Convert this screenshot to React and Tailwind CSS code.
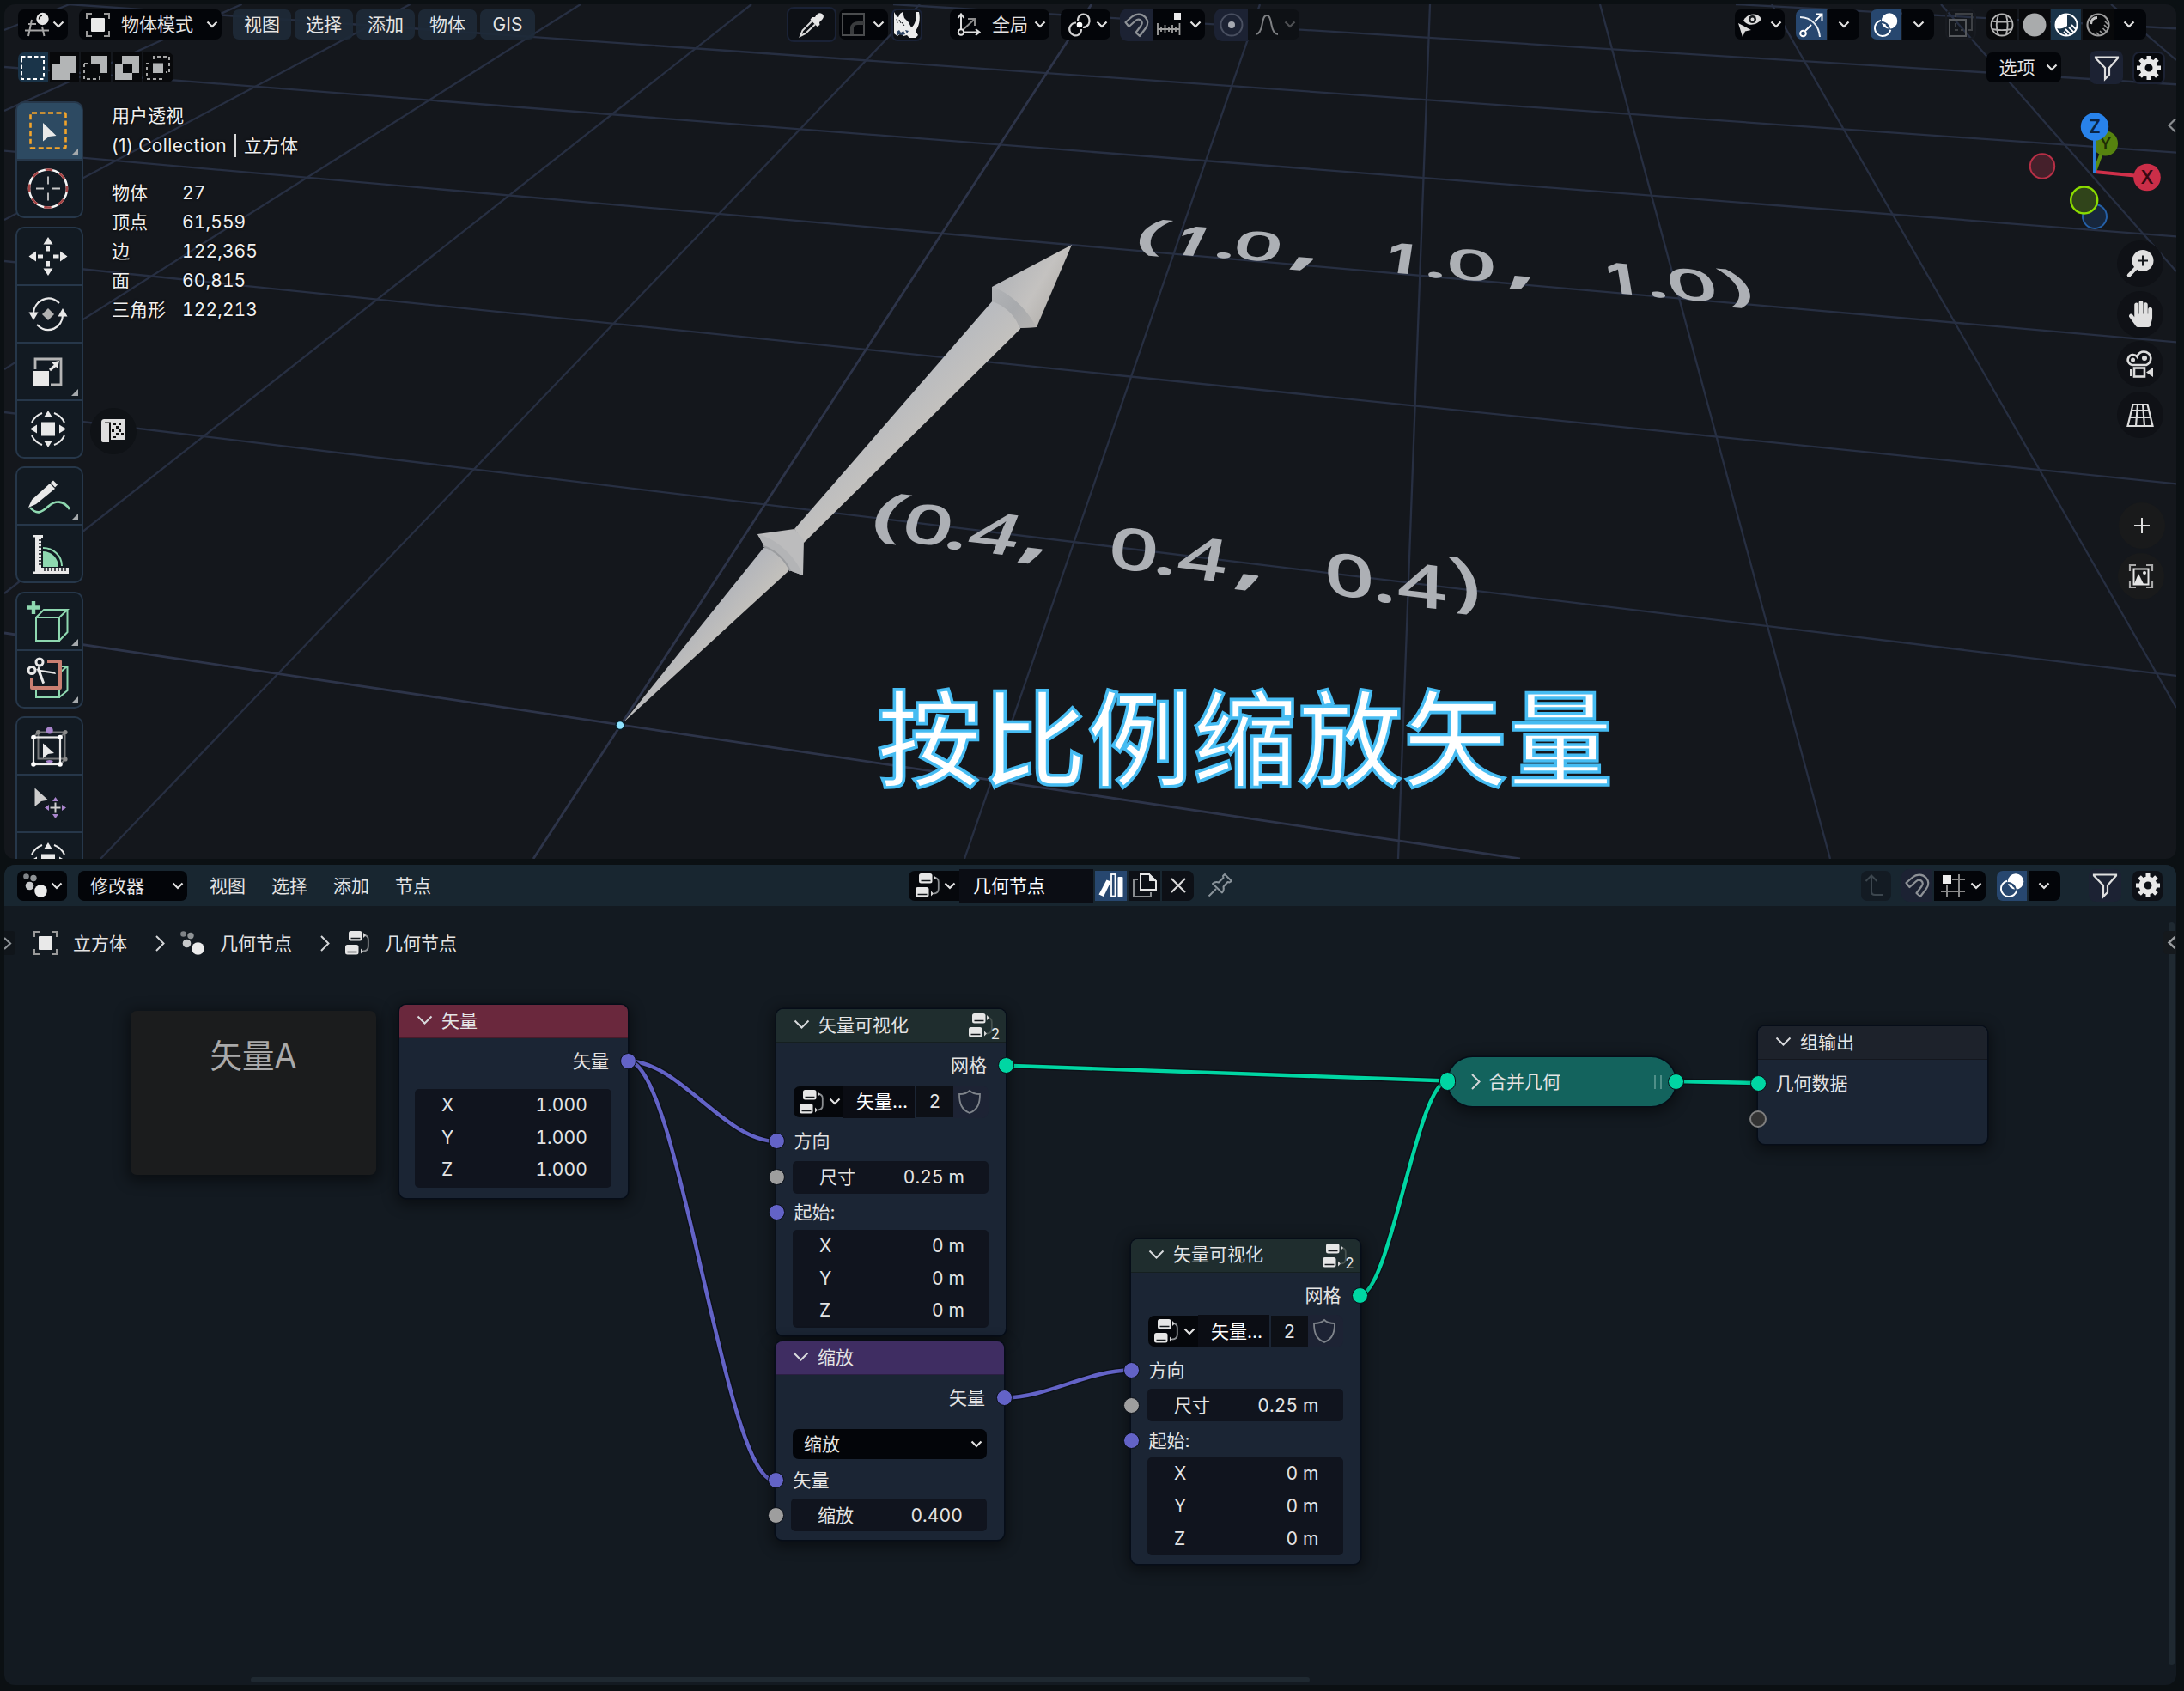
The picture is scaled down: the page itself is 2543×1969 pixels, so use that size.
import React from "react";
import { FaHandPaper } from "react-icons/fa";

/* ---------- small icon set ---------- */

const Svg = ({ s = 28, w, h, vb, className = "", children }) => (
  <svg width={w || s} height={h || s} viewBox={vb || `0 0 ${w || s} ${h || s}`} fill="none" className={"shrink-0 overflow-visible " + className}>
    {children}
  </svg>
);

const Down = ({ className = "" }) => (
  <Svg w={14} h={9} className={className}>
    <path d="M1.5 1.5 7 7l5.500-5.500" stroke="#e2e2e2" strokeWidth="2.200" />
  </Svg>
);

const HeaderDown = () => (
  <Svg w={17} h={10}>
    <path d="M.5.500 8.500 8.500l8-8" stroke="#d8dadd" strokeWidth="2" />
  </Svg>
);

const Right = () => (
  <Svg w={11} h={19}>
    <path d="M1 1l8.500 8.500L1 18" stroke="#d4d6d8" strokeWidth="2" />
  </Svg>
);

const View3D = () => (
  <Svg>
    <g stroke="#a5a5a5" strokeWidth="2">
      <path d="M4 13h9M0 20.500h28M8 8 4 27M20 16l2.500 11" />
    </g>
    <circle cx="20.500" cy="7" r="7.200" fill="#e6e6e6" />
    <path d="M16.500 7.500c0-2.500 1.500-4 3.500-4.200" stroke="#111" strokeWidth="1.500" />
  </Svg>
);

const ObjectIcon = () => (
  <Svg>
    <path d="M1 7V1h6M21 1h6v6M27 21v6h-6M7 27H1v-6" stroke="#9a9a9a" strokeWidth="2" />
    <rect x="6" y="6" width="16" height="16" rx="1" fill="#e9e9e9" />
  </Svg>
);

const Dots = () => (
  <Svg>
    <circle cx="3.500" cy="3.500" r="3.300" fill="#7f8387" />
    <circle cx="12" cy="5.500" r="3.700" fill="#8f9396" />
    <circle cx="7.500" cy="14.500" r="4.800" fill="#c6c8ca" />
    <circle cx="20.500" cy="20.500" r="7.300" fill="#ececec" />
  </Svg>
);

const TreeIcon = ({ dim }) => (
  <Svg>
    <rect x="4" y="0" width="15.500" height="11.500" rx="2.500" fill="#e6e6e6" />
    <path d="M6.500 8.500h11" stroke="#15191d" strokeWidth="1.500" />
    <rect x="0" y="16" width="15.500" height="11.500" rx="2.500" fill="#e6e6e6" />
    <path d="M2.500 24.500h11" stroke="#15191d" strokeWidth="1.500" />
    <path d="M22 5c4 .300 4.800 2 4.800 5v8c0 3-1.500 5.300-6 5.500" stroke={dim ? "#46524f" : "#8a8d90"} strokeWidth="1.800" />
    <path d="M21 2v6l3-3zM18 20.500v6l3-3z" fill="#d5d5d5" />
  </Svg>
);

const Eyedropper = () => (
  <Svg>
    <path d="M18 5c2-4 5-6 8-4s2.500 5-1 8l-2 2 .500 3-3 2-8-8 2-3z" fill="#e6e6e6" />
    <path d="M14 10 3.500 20.500 1 27l6-3L18 13.500" stroke="#d9d9d9" strokeWidth="2" />
  </Svg>
);

const Corner = () => (
  <Svg>
    <rect x="1" y="1" width="25" height="25" stroke="#4a4c4e" strokeWidth="2" />
    <path d="M12 25v-7c0-4 3-6 7-6h7" stroke="#3a3c3e" strokeWidth="4" />
  </Svg>
);

const Rhino = () => (
  <Svg w={30} h={30}>
    <path d="M0 0l3 5 2 1 2-4 3-2 2 7 5 5 3 6c4-2 6-9 6-18h3c2 9 0 17-4 22l3 5-3 3h-7l-3-3-4 1-3-3-4 3-4-3z" fill="#ececec" />
    <path d="M3 23l3-2 2 3 3-2 2 4-4 1-3-1-3 2zM13 21l4 1-2 3z" fill="#2b4262" />
    <path d="M9 12l3 4M6 9l2 4M3 8l1 5" stroke="#14181d" strokeWidth="1" />
  </Svg>
);

const Orient = () => (
  <Svg>
    <path d="M5 22V2M1.500 6 5 1.500 8.500 6M6 22.500h20M22 19l4.500 3.500L22 26" stroke="#dedede" strokeWidth="2" />
    <path d="M7 20 20 8M13 7h8v8" stroke="#8c8c8c" strokeWidth="2" />
    <circle cx="5" cy="22.500" r="3.200" stroke="#e6e6e6" strokeWidth="2" fill="#0a0c0e" />
  </Svg>
);

const Pivot = () => (
  <Svg>
    <path d="M12 9C12 3 17 .500 21 2s6 7 3.500 11.500c-1.500 2-4 3.500-6.500 3.500" stroke="#d4d4d4" strokeWidth="2.200" />
    <path d="M16 19c0 6-5 8.500-9 7S.500 19 3.500 15c1.500-2.500 4-3.500 6.500-3.500" stroke="#d4d4d4" strokeWidth="2.200" />
    <circle cx="14" cy="14" r="3.300" fill="#fff" />
  </Svg>
);

const Magnet = () => (
  <Svg>
    <path d="M1.500 11 9 4.500c5-4.500 12-3.500 15.500.500s3.500 9 0 13.500L18 27l-4.500-4 6-8c2-2.500 1.500-5-.500-6.500s-4-1-6 .800L5.500 16z" stroke="#8d9196" strokeWidth="2.200" strokeLinejoin="round" />
  </Svg>
);

const SnapIncrement = () => (
  <Svg>
    <rect x="20" y="0" width="8" height="8" fill="#ededed" />
    <path d="M1 12v14M9.500 14v10M18 14v10M26.500 12v14M1 19h26M5 16v6M14 16v6M22 16v6" stroke="#a2a2a2" strokeWidth="1.800" />
  </Svg>
);

const SnapGrid = () => (
  <Svg>
    <rect x="2" y="2" width="10" height="10" fill="#ededed" />
    <path d="M21 1v26M7 14v13M13 7h15M0 21h28" stroke="#8a8a8a" strokeWidth="2" />
  </Svg>
);

const Proportional = () => (
  <Svg>
    <circle cx="14" cy="14" r="12.500" stroke="#494f60" strokeWidth="2" />
    <circle cx="14" cy="14" r="4" fill="#a5a8b0" />
  </Svg>
);

const Falloff = () => (
  <Svg>
    <path d="M1 25c4 0 6-3 7.500-11S11 3 14 3s4 3 5.500 11S23 25 27 25" stroke="#7d7f82" strokeWidth="2" />
  </Svg>
);

const Visibility = () => (
  <Svg>
    <path d="M6 9c5-9 16-10 21-2-5 8-16 9-21 2z" fill="#dcdcdc" />
    <circle cx="16.500" cy="7.500" r="4.500" fill="#15181b" />
    <circle cx="16.500" cy="7.500" r="2" fill="#dcdcdc" />
    <path d="M0 12l15 8-7 1.500L5 28z" fill="#dcdcdc" />
  </Svg>
);

const Gizmo = () => (
  <Svg>
    <path d="M1 5c13 0 22 10 23 23" stroke="#e8edf3" strokeWidth="2" />
    <circle cx="4.500" cy="24" r="3.300" stroke="#fff" strokeWidth="2" />
    <path d="M7 21l7-7M18 10l8-8M19 1.500h7.500V9" stroke="#fff" strokeWidth="2" />
  </Svg>
);

const Overlays = () => (
  <Svg>
    <circle cx="18" cy="9.500" r="9.300" fill="#fff" />
    <path d="M8 8.700a9.300 9.300 0 1 0 11.300 11" stroke="#fff" strokeWidth="2" />
    <path d="M9 11a9 9 0 0 1 9 8" stroke="#27476f" strokeWidth="2" />
    <path d="M10.500 10.500l7.500 7.500" stroke="#27476f" strokeWidth="1.200" strokeDasharray="3 2" />
  </Svg>
);

const Xray = () => (
  <Svg>
    <path d="M8 5V1h19v19h-5" stroke="#3d4044" strokeWidth="2" />
    <rect x="1" y="8" width="19" height="19" stroke="#55585c" strokeWidth="2" />
    <path d="M8 12v8h9" stroke="#3d4044" strokeWidth="2" strokeDasharray="4 3" />
  </Svg>
);

const Wire = () => (
  <Svg>
    <g stroke="#b3b3b3" strokeWidth="1.900">
      <circle cx="14" cy="14" r="12.500" />
      <path d="M10 2c-3 8-3 16 0 24M19 3c2 7 2 15 0 22M2 9.500c8 1.500 16 1.500 24 0M2 19c8 1.500 16 1.500 24 0" />
    </g>
  </Svg>
);

const Solid = () => (
  <Svg>
    <circle cx="14" cy="14" r="13.500" fill="#a9abac" />
  </Svg>
);

const Material = () => (
  <Svg>
    <circle cx="14" cy="14" r="12.500" stroke="#fff" strokeWidth="2" />
    <path d="M14 1.500A12.500 12.500 0 0 0 1.500 14c0 2 .500 3 1 4 4 1 8 0 11.500-2z" fill="#fff" />
    <path d="M14 1.500v14" stroke="#fff" strokeWidth="2" />
    <path d="M13 19l6 6M17 17l6 6M20 14l5 5M11 22l4 4" stroke="#fff" strokeWidth="1.800" />
  </Svg>
);

const Rendered = () => (
  <Svg>
    <circle cx="14" cy="14" r="12.500" stroke="#9b9b9b" strokeWidth="2.200" />
    <path d="M5.500 13C6 8 9 5.500 13 5.500" stroke="#c4c4c4" strokeWidth="3" />
    <path d="M12 23l3 3M16 21l3.500 3.500M19.500 18l4 4M21 14l4 4M22 10l4 4" stroke="#9b9b9b" strokeWidth="1.700" />
  </Svg>
);

const Filter = () => (
  <Svg>
    <path d="M1 1.500h26v1L17 14v8l-5 5V14L1 2.500z" stroke="#dfdfdf" strokeWidth="2.200" />
  </Svg>
);

const Gear = () => (
  <Svg>
    <circle cx="14" cy="14" r="7.500" stroke="#e8e8e8" strokeWidth="6" />
    {[0, 45, 90, 135, 180, 225, 270, 315].map((a) => (
      <path key={a} d="M11.500 0h5v5h-5z" fill="#e8e8e8" transform={`rotate(${a} 14 14)`} />
    ))}
  </Svg>
);

/* ---------- building blocks ---------- */

const btn = "flex items-center h-[35px] shrink-0 ";
const Menu = ({ className, children }) => (
  <div className={btn + "justify-center rounded-[7px] bg-[#1e2a38]/90 w-[68px] " + className}>{children}</div>
);

const ViewportHeader = () => (
  <div className="flex items-center mt-[6px] ml-4 h-[35px]">
    <div className={btn + "w-[58px] rounded-[7px] bg-[#030509] pl-[8px] gap-[4px]"}><View3D /><Down /></div>
    <div className={btn + "w-[166px] rounded-[7px] bg-[#030509] ml-[13px] pl-[8px]"}>
      <ObjectIcon /><span className="ml-[13px] w-[84px]">物体模式</span><Down className="ml-[15px]" />
    </div>
    <Menu className="ml-[13px]">视图</Menu>
    <Menu className="ml-1">选择</Menu>
    <Menu className="ml-1">添加</Menu>
    <Menu className="ml-1">物体</Menu>
    <div className={btn + "w-[64px] justify-center rounded-[7px] bg-[#1e2a38]/90 ml-1"}>GIS</div>

    <div className="flex items-center justify-center h-[41px] w-[58px] ml-[293px] rounded-[8px] border-2 border-[#1a2236] bg-[#0d1015] shrink-0"><Eyedropper /></div>
    <div className={btn + "w-[57px] rounded-[7px] bg-[#030509] ml-[3px] pl-[3px] gap-[8px]"}><Corner /><Down /></div>
    <div className="flex items-center justify-center h-[38px] w-[36px] ml-1 rounded-[7px] border-2 border-[#1a2236] bg-[#0d1015] shrink-0"><Rhino /></div>
    <div className={btn + "w-[116px] rounded-[7px] bg-[#030509] ml-8 pl-[8px]"}>
      <Orient /><span className="ml-[13px] w-[43px]">全局</span><Down className="ml-[6px]" />
    </div>
    <div className={btn + "w-[58px] rounded-[7px] bg-[#030509] ml-[13px] pl-[8px] gap-[5px]"}><Pivot /><Down /></div>
    <div className="flex items-center justify-center h-[38px] w-[38px] ml-[11px] rounded-l-[9px] bg-[#1c2233] shrink-0"><Magnet /></div>
    <div className={btn + "w-[61px] rounded-r-[7px] bg-[#030509] pl-[5px] gap-[10px]"}><SnapIncrement /><Down /></div>
    <div className="flex items-center justify-center h-[38px] w-[39px] ml-[11px] rounded-l-[9px] bg-[#1c2233] shrink-0"><Proportional /></div>
    <div className={btn + "w-[60px] rounded-r-[7px] bg-[#0e1115] pl-[8px] gap-[6px]"}><Falloff /><span className="flex opacity-30"><Down /></span></div>

    <div className={btn + "w-[58px] rounded-[7px] bg-[#030509] ml-[507px] pl-[4px] gap-[9px]"}><Visibility /><Down /></div>
    <div className={btn + "w-[36px] justify-center rounded-l-[7px] bg-[#27476f] ml-[13px]"}><Gizmo /></div>
    <div className={btn + "w-[36px] justify-center rounded-r-[7px] bg-[#030509] ml-[2px]"}><Down /></div>
    <div className={btn + "w-[35px] justify-center rounded-l-[7px] bg-[#27476f] ml-[13px]"}><Overlays /></div>
    <div className={btn + "w-[37px] justify-center rounded-r-[7px] bg-[#030509] ml-[2px]"}><Down /></div>
    <div className={btn + "w-[36px] justify-center rounded-[7px] border-2 border-[#181b21] ml-[13px]"}><Xray /></div>
    <div className={btn + "w-[36px] justify-center rounded-l-[7px] bg-[#08090b] ml-[12px]"}><Wire /></div>
    <div className={btn + "w-[36px] justify-center bg-[#08090b] ml-[1.500px]"}><Solid /></div>
    <div className={btn + "w-[35px] justify-center bg-[#1a3449] ml-[1.500px]"}><Material /></div>
    <div className={btn + "w-[36px] justify-center bg-[#08090b] ml-[2px]"}><Rendered /></div>
    <div className={btn + "w-[37px] justify-center rounded-r-[7px] bg-[#030509] ml-[1px] pr-[3px]"}><Down /></div>
  </div>
);

const sel = "flex items-center justify-center w-[34.5px] h-[35px] shrink-0 ";
const SelectRow = () => (
  <div className="flex items-center mt-[15px] ml-4 h-[35px]">
    <div className="flex gap-[2px] rounded-[7px] overflow-hidden shrink-0">
      <div className={sel + "bg-[#1a3449]"}>
        <Svg><rect x="1" y="1" width="26" height="26" stroke="#fff" strokeWidth="2" strokeDasharray="4.500 3" /></Svg>
      </div>
      <div className={sel + "bg-[#08090b]"}>
        <Svg><path d="M9 0h19v20h-8v8H0V9h9z" fill="#b3b5b6" /></Svg>
      </div>
      <div className={sel + "bg-[#08090b]"}>
        <Svg>
          <path d="M9 0h19v20h-9V9H9z" fill="#b3b5b6" />
          <path d="M1 9v18h18v-5M1 9h5" stroke="#a5a5a5" strokeWidth="2" strokeDasharray="4 3" />
        </Svg>
      </div>
      <div className={sel + "bg-[#08090b]"}>
        <Svg>
          <path d="M8 0h20v20h-8v8H0V9h8zM9 9v11h11V9z" fill="#b3b5b6" fillRule="evenodd" />
        </Svg>
      </div>
      <div className={sel + "bg-[#08090b]"}>
        <Svg>
          <rect x="8" y="8.500" width="12" height="11.500" fill="#b3b5b6" />
          <path d="M9 4V1h18v18h-4M4 9H1v18h18v-4" stroke="#a5a5a5" strokeWidth="2" strokeDasharray="4 3" />
        </Svg>
      </div>
    </div>
    <div className={btn + "w-[87px] ml-[2111px] pl-[15px] rounded-[7px] bg-[#030509]"}>
      <span className="w-[42px]">选项</span><Down className="ml-[12px]" />
    </div>
    <div className="flex items-center justify-center w-[39px] h-[39px] ml-[33.5px] rounded-[8px] bg-[#1c2233] shrink-0"><Filter /></div>
    <div className="flex items-center justify-center w-[38px] h-[38px] ml-[11px] rounded-[8px] border-2 border-[#1c2233] bg-[#07090d] shrink-0"><Gear /></div>
  </div>
);

/* ---------- tool shelf ---------- */

const T = ({ children }) => <Svg s={48}>{children}</Svg>;
const W = "#e9e9e9";
const G = "#8ed8b0";

const TransformTool = () => (
  <T>
    <path d="M5 17A21 21 0 0 1 17 6M31 6A21 21 0 0 1 43 17M43 32A21 21 0 0 1 31 43M17 43A21 21 0 0 1 5 32" stroke={W} strokeWidth="2" />
    <rect x="16" y="16.500" width="16" height="16" fill={W} />
    <path d="M24 3l-5 8h10zM24 46l-5-8h10zM3 24.500l8-5v10zM45 24.500l-8-5v10z" fill={W} />
  </T>
);

const tools = {
  select: (
    <T>
      <rect x="3.500" y="3.500" width="41" height="41" rx="1.500" stroke="#f3a42b" strokeWidth="2.600" strokeDasharray="6 3.500" />
      <path d="M18 15l15.500 15-8.500 1-7 5.500z" fill={W} />
    </T>
  ),
  cursor: (
    <T>
      <circle cx="24" cy="24.500" r="22" stroke="#f4f4f4" strokeWidth="2.600" />
      <circle cx="24" cy="24.500" r="22" stroke="#a44445" strokeWidth="2.600" strokeDasharray="8.640 8.640" strokeDashoffset="4" />
      <path d="M24 10.500v9M24 29.500v9M10 24.500h9M29 24.500h9" stroke="#c9c9c9" strokeWidth="1.800" />
    </T>
  ),
  move: (
    <T>
      <path d="M24 2l-5.500 8.500h11zM24 47l-5.500-8.500h11zM1.500 24.500l8.500-6v12zM46.500 24.500l-8.500-6v12z" fill={W} />
      <path d="M24 12.500v6M24 30v6.500M12 24.500h6M30 24.500h6.500" stroke={W} strokeWidth="4" />
    </T>
  ),
  rotate: (
    <T>
      <path d="M7 23C8 10 24 0 37 12M41 26C41 40 24 50 11 37" stroke={W} strokeWidth="2.200" />
      <path d="M1.500 22.500h11L7 32zM46.500 27.500h-11L41 18z" fill={W} />
      <path d="M24 18l7 7-7 7-7-7z" fill="#b1b1b1" />
    </T>
  ),
  scale: (
    <T>
      <path d="M9 22V10h30v30H27" stroke="#b5b5b5" strokeWidth="2.800" />
      <rect x="6" y="24" width="19" height="18" fill={W} />
      <path d="M26 23l7-6" stroke={W} strokeWidth="3" />
      <path d="M28 14l9-2-2 9z" fill={W} />
    </T>
  ),
  transform: <TransformTool />,
  annotate: (
    <T>
      <path d="M3 38C12 48 18 42 25 36s17-7 24 4" stroke={G} strokeWidth="2.600" />
      <path d="M1 38l4-9 21-19 6 6-22 18z" fill={W} />
      <path d="M27 9l3-2.500 5 5-3 3z" fill={W} />
    </T>
  ),
  measure: (
    <T>
      <path d="M6 3h12v3h-2v35h32v7H6v-2.500h3V5.500H6z" fill={W} />
      <path d="M13 9h5M13 13h5M13 17h5M13 21h5M13 25h5M13 29h5M13 33h5M13 37h5M20 41v4M24 41v4M28 41v4M32 41v4M36 41v4M40 41v4M44 41v4" stroke="#14191f" strokeWidth="1.500" />
      <path d="M18 22c10 0 18 8 18 18H18z" fill={G} />
      <path d="M18 18c12 0 22 9 22 21" stroke={G} strokeWidth="2" />
    </T>
  ),
  addCube: (
    <T>
      <path d="M7 1v15M-.500 8.500h15" stroke={G} strokeWidth="4.400" />
      <path d="M10 20h27v27H10zM10 20l9-9h27.500L37 20M46.500 11v26L37 47" stroke={G} strokeWidth="2" />
    </T>
  ),
  cut: (
    <T>
      <path d="M10 36v10h27V36M37 46l9.500-8V10h-7M38 17l8-7" stroke={G} strokeWidth="2" />
      <path d="M23 4h15v31H5V24" stroke="#c97f72" strokeWidth="4" strokeLinejoin="round" />
      <circle cx="14" cy="5" r="4" stroke={W} strokeWidth="3" />
      <circle cx="5" cy="14.500" r="4" stroke={W} strokeWidth="3" />
      <path d="M9 13l23 3.500L33 19 14 16zM13 9l7 20-2.500 1.500L11 14z" fill={W} />
    </T>
  ),
  cage: (
    <T>
      <path d="M12.500 8.500h31v31h-31zM7 14.500l5.500-6M38 14.500l6-6M38 46l6-6" stroke="#77797b" strokeWidth="2" />
      <rect x="7" y="14.500" width="31" height="31.500" stroke={W} strokeWidth="2.200" />
      <circle cx="12.500" cy="8.500" r="2.600" fill="#8a8a8a" /><circle cx="44" cy="8.500" r="2.600" fill="#8a8a8a" /><circle cx="44" cy="40" r="2.600" fill="#8a8a8a" />
      <circle cx="7" cy="14.500" r="2.800" fill="#fff" /><circle cx="38" cy="14.500" r="2.800" fill="#fff" /><circle cx="7" cy="46" r="2.800" fill="#fff" /><circle cx="38" cy="46" r="2.800" fill="#fff" />
      <circle cx="25.700" cy="6.500" r="4" fill="#a884cc" /><ellipse cx="25.700" cy="42.500" rx="4" ry="1.600" fill="#a884cc" />
      <path d="M18 21.500l13 11.500-7 1-6 5z" fill={W} />
    </T>
  ),
  tweak: (
    <T>
      <path d="M8.500 6.500L24 20.500l-8 1.500-7.500 6z" fill="#cdcdcd" />
      <path d="M32.500 23.500v12M26.500 29.500h12" stroke="#cfcfcf" strokeWidth="2" />
      <path d="M32.500 17l-3.500 5h7zM32.500 42l-3.500-5h7zM20 29.500l5-3.500v7zM45 29.500l-5-3.500v7z" fill="#a884cc" />
    </T>
  ),
};

const groups = [
  [["select", 1], ["cursor", 0]],
  [["move", 0], ["rotate", 0], ["scale", 1], ["transform", 0]],
  [["annotate", 1], ["measure", 0]],
  [["addCube", 1], ["cut", 1]],
  [["cage", 0], ["tweak", 0], ["transform", 0]],
];

const ToolShelf = () => (
  <div className="flex flex-col gap-[9.500px] w-[79px] shrink-0">
    {groups.map((g, i) => (
      <div key={i} className="flex flex-col gap-[2px] rounded-[10px] border-2 border-[#26374a] bg-[#26374a] overflow-hidden shrink-0">
        {g.map(([name, mark]) => (
          <div key={name} className={"relative flex items-center justify-center h-[65px] pr-[3px] pb-px " + (name === "select" ? "bg-[#2d4a62]" : "bg-[#121a22]")}>
            {tools[name]}
            {mark ? <Svg w={8} h={8} className="absolute right-[4px] bottom-[4px]"><path d="M8 0v8H0z" fill="#a5a9ac" /></Svg> : null}
          </div>
        ))}
      </div>
    ))}
  </div>
);

const num = "tabular-nums tracking-[0.1px]";

const stats = [["物体", "27"], ["顶点", "61,559"], ["边", "122,365"], ["面", "60,815"], ["三角形", "122,213"]];
const Stats = () => (
  <div className="flex flex-col ml-[33px] -mt-[1px] text-[#f0f0f0] [text-shadow:0_0_3px_#000]">
    <div className="h-[35px] flex items-center">用户透视</div>
    <div className="h-[34px] flex items-center"><span className="tracking-[0.35px]">(1) Collection</span><span className="w-[2px] h-[27px] bg-[#d8d8d8] mx-[9px]" />立方体</div>
    <div className="mt-[21px] flex flex-col">
      {stats.map(([k, v]) => (
        <div key={k} className="h-[34px] flex items-center"><span className="w-[82px]">{k}</span><span className={num}>{v}</span></div>
      ))}
    </div>
  </div>
);

const Round = ({ className = "bg-[#0f1116]", children }) => (
  <div className={"flex items-center justify-center size-[54px] rounded-full shrink-0 " + className}>{children}</div>
);

const NavButtons = () => (
  <div className="flex flex-col gap-[4.500px] mt-[162px] ml-auto mr-[15px]">
    <Round>
      <Svg s={32}>
        <path d="M12 20L3 29.500" stroke="#e0e0e0" strokeWidth="4.500" strokeLinecap="round" />
        <circle cx="19" cy="12.500" r="12.500" fill="#e0e0e0" />
        <path d="M19 6.500v12M13 12.500h12" stroke="#15181c" strokeWidth="2" />
      </Svg>
    </Round>
    <Round><FaHandPaper size={31} color="#e0e0e0" /></Round>
    <Round>
      <Svg s={32}>
        <g stroke="#dcdcdc" strokeWidth="2.600">
          <path d="M7 17a6 6 0 1 1 5.500-9.500A8 8 0 1 1 23 17z" />
          <rect x="9" y="20.500" width="12" height="10" />
        </g>
        <circle cx="7.500" cy="11" r="2.500" fill="#dcdcdc" /><circle cx="21" cy="9" r="3" fill="#dcdcdc" />
        <path d="M31 20v11l-8-5.500zM4 22h3v8H4z" fill="#dcdcdc" />
      </Svg>
    </Round>
    <Round>
      <Svg s={32}>
        <path d="M7.500 4h17l6 25h-29zM5.500 11h21M3.500 19h25M13 4l-2 25M19 4l2 25" stroke="#dcdcdc" strokeWidth="2.200" />
      </Svg>
    </Round>
    <Round className="bg-[#191a1b] mt-[71px] ml-[2px] -mr-[2px]">
      <Svg s={18}><path d="M9 0v18M0 9h18" stroke="#dedede" strokeWidth="2" /></Svg>
    </Round>
    <Round className="bg-[#191a1b] ml-[1px] -mr-[1px]">
      <Svg><path d="M1 8V1h7M20 1h7v7M27 20v7h-7M8 27H1v-7" stroke="#a9a9a9" strokeWidth="2.200" />
        <rect x="5.500" y="5.500" width="17" height="18" stroke="#e6e6e6" strokeWidth="2" />
        <path d="M6 23l5-12 6 12z" fill="#e6e6e6" /><circle cx="18" cy="10" r="2" fill="#e6e6e6" />
      </Svg>
    </Round>
  </div>
);

/* ---------- 3D scene ---------- */

const gridLines = [
  [676, 5, 5, 430], [875, 5, 5, 691], [1071, 5, 117, 1000], [477.6, 5, 5, 256], [281.6, 5, 5, 129], [81, 5, 5, 35],
  [1467, 5, 1123, 1000], [1665, 5, 1628, 1000], [1863, 5, 2131, 1000], [2063, 5, 2534, 824], [2260, 5, 2534, 316], [2458, 5, 2534, 70],
  [5, 78, 2535, 275.5], [80, 5, 2535, 177.700], [1040, 5, 2535, 98.300], [2021, 5, 2535, 33.300],
  [5, 175.700, 2535, 398.500], [5, 304, 2535, 563.500], [5, 480, 2535, 787],
];

// [glyph, x, baseline, x scale, y scale, lean]
const upper = [
  ["(", 1337, 290, 1.2, 0.48, 0.4], ["1", 1378, 297, 0.68, 0.455, 0.48], [".", 1424, 300, 1.1, 0.46, 0.3], ["0", 1461, 303, 1.0, 0.46, 0.25], [",", 1518, 307, 1.5, 0.62, 0.2],
  ["1", 1628, 318, 0.68, 0.475, 0.15], [".", 1671, 323, 1.1, 0.48, 0], ["0", 1713, 326, 1.04, 0.49, 0.02], [",", 1772, 329, 1.5, 0.64, -0.1],
  ["1", 1889, 342, 0.68, 0.49, -0.16], [".", 1932, 346, 1.1, 0.49, -0.3], ["0", 1974, 350, 1.04, 0.51, -0.22], [")", 2028, 351, 1.2, 0.52, -0.4],
];
const lower = [
  ["(", 1030, 622, 1.3, 0.66, 0.33], ["0", 1076, 633.500, 1.02, 0.63, 0.22], [".", 1110, 639, 1.1, 0.64, 0.3], ["4", 1150, 644, 1.0, 0.64, 0.4], [",", 1202, 647, 1.5, 0.74, 0.25],
  ["0", 1318, 664, 1.02, 0.67, 0.1], [".", 1355, 669, 1.1, 0.67, 0.1], ["4", 1396, 674.500, 1.0, 0.67, 0.2], [",", 1454, 678, 1.5, 0.76, 0.15],
  ["0", 1572, 695, 1.02, 0.69, -0.03], [".", 1612, 701, 1.1, 0.7, 0], ["4", 1655, 707, 1.0, 0.7, 0.02], [")", 1709, 704, 1.15, 0.76, -0.15],
];
const Glyphs = ({ items, slope }) =>
  items.map(([ch, x, y, sx, sy, k], i) => (
    <text key={i} textAnchor="middle" fontFamily={ch === "1" ? "Inter" : undefined} fontWeight={ch === "1" ? 800 : undefined} transform={`matrix(${sx} ${sx * slope} ${-k * sy} ${sy} ${x} ${y})`}>{ch}</text>
  ));

const Scene = () => (
  <svg className="absolute inset-0" width="2529" height="995" viewBox="5 5 2529 995" fill="none">
    <defs>
      <linearGradient id="shaft" gradientUnits="userSpaceOnUse" x1="1030" y1="480" x2="1060" y2="510">
        <stop offset="0" stopColor="#b9bbbf" /><stop offset="1" stopColor="#c3c1be" />
      </linearGradient>
      <linearGradient id="head" gradientUnits="userSpaceOnUse" x1="1160" y1="325" x2="1225" y2="365">
        <stop offset="0" stopColor="#b2b4b8" /><stop offset=".6" stopColor="#c4c2c0" /><stop offset="1" stopColor="#b5b2ae" />
      </linearGradient>
      <linearGradient id="low" gradientUnits="userSpaceOnUse" x1="830" y1="705" x2="855" y2="728">
        <stop offset="0" stopColor="#b4b6bb" /><stop offset="1" stopColor="#c2c0bc" />
      </linearGradient>
      <linearGradient id="rim" gradientUnits="userSpaceOnUse" x1="1155" y1="340" x2="1205" y2="382">
        <stop offset="0" stopColor="#b0b2b5" /><stop offset=".5" stopColor="#a8aaad" /><stop offset="1" stopColor="#b4b2b0" />
      </linearGradient>
    </defs>
    <g stroke="#272f42" strokeWidth="2.300">
      {gridLines.map(([a, b, c, d], i) => <line key={i} x1={a} y1={b} x2={c} y2={d} />)}
    </g>
    <path d="M1271 5 621 1000M5 737 1770 1000" stroke="#2d3449" strokeWidth="2.800" />

    <path d="M1156 350 925 616 936 632 1188 383 1195 350z" fill="url(#shaft)" />
    <path d="M1248 285 1155 334v17c14 4 28 17 32 31l20-1z" fill="url(#head)" />
    <path d="M1155 334v17c14 4 28 17 32 31l20-1c-12-22-32-41-52-47z" fill="url(#rim)" />
    <path d="M889 638 726 841 918 665 925 640z" fill="url(#low)" />
    <path d="M882 622 925 616 936 629 935 670 919 664c-4-11-15-21-28-26z" fill="#bcbcbd" />
    <path d="M882 622l9 16c13 5 24 15 28 26l16 6c-7-19-28-42-53-48z" fill="#b3b4b6" />
    <path d="M889 636c14 5 26 16 31 29" stroke="#9b9da0" strokeWidth="2" />
    <circle cx="722" cy="844.500" r="5" fill="#8fe3ff" stroke="#06202c" strokeWidth="1.500" />

    <g fill="#adb0b5" fontFamily='"Open Sans","Noto Sans",sans-serif' fontWeight="600" fontSize="100">
      <Glyphs items={upper} slope={0.087} />
      <Glyphs items={lower} slope={0.12} />
    </g>
    <text x="1021" y="906" fontFamily='"Noto Sans CJK SC",sans-serif' fontWeight="500" fontSize="122" fill="#fff" stroke="#46bcf2" strokeWidth="3.600" strokeLinejoin="miter" textLength="857">按比例缩放矢量</text>

    <g strokeWidth="4">
      <path d="M2439 200l12-33" stroke="#5b8f12" />
      <circle cx="2451.500" cy="167" r="14.500" fill="#56830f" />
      <text x="2451.500" y="174" textAnchor="middle" fontFamily="Inter" fontWeight="600" fontSize="19" fill="#1e2e05">Y</text>
      <path d="M2439 200l52 5" stroke="#d0304a" />
      <circle cx="2500" cy="206.500" r="15.800" fill="#cb2e48" />
      <text x="2500" y="214" textAnchor="middle" fontFamily="Inter" fontWeight="600" fontSize="21" fill="#350912">X</text>
      <path d="M2439 202v-50" stroke="#2c7edd" />
      <circle cx="2439" cy="147.500" r="16.200" fill="#2882ea" />
      <text x="2439" y="155" textAnchor="middle" fontFamily="Inter" fontWeight="600" fontSize="21" fill="#0a2444">Z</text>
      <circle cx="2378" cy="193.500" r="14.200" fill="#45202b" stroke="#b82f46" strokeWidth="2" />
      <circle cx="2439" cy="252" r="14" fill="#17273d" stroke="#2560a8" strokeWidth="2" />
      <circle cx="2426.700" cy="233" r="15.500" fill="#30441a" stroke="#8bdc00" strokeWidth="2.400" />
    </g>
    <path d="M2533 138.500l-7.500 7.500 7.500 7.500" stroke="#8a8d90" strokeWidth="2.200" />
  </svg>
);

const MapButton = () => (
  <div className="absolute left-[100px] top-[470px]">
    <Round className="bg-[#0f1216]">
      <Svg>
        <path d="M0 4c0-3 1-4 4-4h23.500v24H9v3H2c-1.500 0-2-1-2-3z" fill="#dedede" />
        <path d="M9 24V5H4V3.500h7V24z" fill="#111" />
        <g fill="#111"><path d="M14 4h3v3h-3zM20 4h3v3h-3zM17 8h3v3h-3zM12 12h3v3h-3zM20 12h3v3h-3zM17 16h3v3h-3zM23 16h3v3h-3zM14 20h3v2h-3z" /></g>
      </Svg>
    </Round>
  </div>
);

const Viewport = () => (
  <div className="relative w-[2529px] h-[995px] rounded-[12px] overflow-hidden bg-[#14171c] shrink-0">
    <Scene />
    <div className="relative flex flex-col">
      <ViewportHeader />
      <SelectRow />
      <div className="flex items-start mt-[22px] ml-[13px]">
        <ToolShelf />
        <Stats />
        <NavButtons />
      </div>
    </div>
    <MapButton />
  </div>
);

/* ---------- node editor ---------- */

const NodeHeader = () => (
  <div className="flex items-center h-[48px] pl-[15px] bg-[#182630] shrink-0">
    <div className={btn + "w-[58px] rounded-[7px] bg-[#030509] pl-[7px] gap-[4px]"}><Dots /><Down /></div>
    <div className={btn + "w-[127px] rounded-[7px] bg-[#030509] ml-[13px] pl-[14px]"}><span className="w-[63px]">修改器</span><Down className="ml-[32px]" /></div>
    <span className="ml-[26px] w-[72px]">视图</span>
    <span className="w-[72px]">选择</span>
    <span className="w-[72px]">添加</span>
    <span className="w-[43px]">节点</span>

    <div className={btn + "w-[59px] rounded-l-[7px] bg-[#06080c] ml-[555px] pl-[8px] gap-[5px]"}><TreeIcon /><Down /></div>
    <div className="flex items-center w-[156px] h-[39px] bg-[#0b0d14] pl-[16px] text-white shrink-0">几何节点</div>
    <div className={btn + "w-[37px] justify-center bg-[#27476f] ml-[2px]"}>
      <Svg><path d="M8.500 7.500l5 2L5 27l-5.500-2.500z" fill="#fff" /><rect x="14" y="1" width="4.500" height="25.500" stroke="#fff" strokeWidth="1.800" /><rect x="21.500" y="4" width="6" height="23.500" rx="1" fill="#fff" /></Svg>
    </div>
    <div className={btn + "w-[37px] justify-center bg-[#0d1016] ml-[2px]"}>
      <Svg><path d="M9 1h10l8 8v10H9z" stroke="#e6e6e6" strokeWidth="2" /><path d="M19 0v9h9z" fill="#e6e6e6" /><path d="M6 7H1v20h20v-5" stroke="#8a8d90" strokeWidth="2" /></Svg>
    </div>
    <div className={btn + "w-[37px] justify-center rounded-r-[7px] bg-[#0d1016] ml-[2px]"}>
      <Svg s={16}><path d="M0 0l16 16M16 0L0 16" stroke="#dcdcdc" strokeWidth="2.200" /></Svg>
    </div>
    <Svg className="ml-[17px]">
      <path d="M19 1l8 8-2.500 1.500-2-.500-5 5.500c1 3 0 5-1.500 7L5 12c2-2 4.500-2.500 7-1.500l5.500-5.500-.500-2zM9 18l-8.500 8.500" stroke="#8a949b" strokeWidth="2" strokeLinejoin="round" />
    </Svg>

    <div className={btn + "w-[35px] justify-center rounded-[7px] bg-[#131b23] ml-[732px]"}>
      <Svg><path d="M8 3v18c0 3 1 4 4 4h10M1.500 9 8 2.500 14.500 9" stroke="#3c464e" strokeWidth="2" /></Svg>
    </div>
    <div className="flex items-center justify-center h-[38px] w-[36px] ml-[12px] rounded-l-[9px] bg-[#1c2233] shrink-0"><Magnet /></div>
    <div className={btn + "w-[60px] rounded-r-[7px] bg-[#030509] ml-[2px] pl-[8px] gap-[6px]"}><SnapGrid /><Down /></div>
    <div className={btn + "w-[35px] justify-center rounded-l-[7px] bg-[#27476f] ml-[13px]"}><Overlays /></div>
    <div className={btn + "w-[37px] justify-center rounded-r-[7px] bg-[#030509] ml-[2px] pr-[2px]"}><Down /></div>
    <div className="flex items-center justify-center w-[38px] h-[38px] ml-[33px] rounded-[8px] bg-[#1c2233] shrink-0"><Filter /></div>
    <div className={btn + "w-[35px] justify-center ml-[13px] rounded-[7px] bg-[#0d1016]"}><Gear /></div>
  </div>
);

const Breadcrumb = () => (
  <div className="flex items-center h-[28px] mt-[29px]">
    <div className="flex items-center w-[13px] h-[28px] rounded-r-[4px] bg-[#10151a]">
      <Svg w={9} h={15}><path d="M0 1l7 6.500L0 14" stroke="#8f9498" strokeWidth="2.200" /></Svg>
    </div>
    <div className="flex items-center ml-[21px]"><ObjectIcon /></div>
    <span className="ml-[18px] w-[96px]">立方体</span>
    <Right />
    <div className="flex ml-[18px]"><Dots /></div>
    <span className="ml-[18px] w-[117px]">几何节点</span>
    <Right />
    <div className="flex ml-[18px]"><TreeIcon /></div>
    <span className="ml-[18px]">几何节点</span>
  </div>
);

const Node = ({ className, head, title, icon, children }) => (
  <div className={"absolute flex flex-col rounded-[8px] bg-[#1b2534] ring-[1.5px] ring-[#060d18] shadow-[0_4px_16px_4px_rgba(0,0,0,0.45)] " + className}>
    <div className={"flex items-center h-[39px] pl-[21px] pb-[2px] rounded-t-[8px] border-b border-black/30 shrink-0 " + head}>
      <HeaderDown /><span className="ml-[11px]">{title}</span>{icon}
    </div>
    {children}
  </div>
);

const Socket = ({ side, color = "bg-[#6363c7]" }) => (
  <span className={"absolute top-1/2 -mt-[9.5px] size-[19px] rounded-full border-[1.5px] border-[#0a0f17] " + color + (side === "l" ? " -left-[9.5px]" : " -right-[9.5px]")} />
);

const Row = ({ side, color, className = "", children }) => (
  <div className={"relative flex items-center shrink-0 " + (side === "r" ? "justify-end pr-[22px] " : "pl-[20.5px] ") + className}>
    {children}
    <Socket side={side} color={color} />
  </div>
);

const Field = ({ label, value }) => (
  <div className="flex items-center justify-between w-full h-full pl-[31px] pr-[28px] rounded-[5px] bg-[#10141e]"><span>{label}</span><span className={num}>{value}</span></div>
);

const Vec = ({ v, className }) => (
  <div className={"flex flex-col rounded-[5px] bg-[#10141e] shrink-0 " + className}>
    {["X", "Y", "Z"].map((a) => (
      <div key={a} className="flex items-center justify-between h-[37.700px] pl-[31px] pr-[28px]"><span>{a}</span><span className={num}>{v}</span></div>
    ))}
  </div>
);

const VizNode = ({ className, dirRow, originRow }) => (
  <Node className={className} head="bg-[#1f2d2e]" title="矢量可视化" icon={
    <div className="flex items-center ml-auto mr-[7px] mt-[2px]"><TreeIcon dim /><span className="text-[17px] -ml-[2px] mt-[20px] leading-none">2</span></div>
  }>
    <Row side="r" color="bg-[#00d6a3]" className="h-[36px] mt-[8.500px]">网格</Row>
    <div className="flex items-center mt-[6px] ml-[20px] w-[227px] h-[36px] shrink-0">
      <div className="flex items-center w-[58px] h-full rounded-l-[7px] bg-[#05070b] pl-[7px] gap-[6px]"><TreeIcon /><Down /></div>
      <div className="flex items-center w-[83px] h-[38px] bg-[#0b0d14] pl-[15px] text-white">矢量...</div>
      <div className="flex items-center justify-center w-[43px] h-full ml-[2px] bg-[#0d1016]">2</div>
      <div className="flex items-center w-[41px] h-[38px] pl-[5px] rounded-r-[8px] bg-[#1d2334]">
        <Svg><path d="M14 1c3 3 7 4 12 4 0 10-2 18-12 22C4 23 2 15 2 5c5 0 9-1 12-4z" stroke="#7e838a" strokeWidth="1.800" /></Svg>
      </div>
    </div>
    <Row side="l" className={dirRow}>方向</Row>
    <div className="relative h-[38px] pl-[19px] pr-[20px] shrink-0"><Field label="尺寸" value="0.25 m" /><Socket side="l" color="bg-[#9e9e9e]" /></div>
    <Row side="l" className={originRow}>起始:</Row>
    <Vec v="0 m" className="ml-[19px] mr-[20px] h-[114px]" />
  </Node>
);

const Links = () => (
  <svg className="absolute inset-0" width="2529" height="907" viewBox="5 1055 2529 907" fill="none">
    {[
      ["M731 1235.500C791 1235.500 844 1329 904 1329", "#6363c7"],
      ["M731 1235.500C791 1235.500 843 1724 902 1724", "#6363c7"],
      ["M1169 1627.500C1220 1627.500 1266 1595.500 1317 1595.500", "#6363c7"],
      ["M1171 1240.700 1686 1258.500", "#00d6a3"],
      ["M1583 1508C1619 1508 1650 1258.500 1686 1258.500", "#00d6a3"],
      ["M1951 1259 2047 1261", "#00d6a3"],
    ].map(([d, c]) => (
      <g key={d}><path d={d} stroke="#0c1117" strokeWidth="7" /><path d={d} stroke={c} strokeWidth="4.400" /></g>
    ))}
  </svg>
);

const NodeEditor = () => (
  <div className="flex flex-col w-[2529px] h-[955px] mt-[7px] rounded-[12px] overflow-hidden bg-[#131a21] shrink-0">
    <NodeHeader />
    <div className="relative flex-1">
      <Breadcrumb />
      <Links />

      <div className="absolute left-[147px] top-[122px] w-[286px] h-[191px] flex justify-center rounded-[7px] bg-[#1b1c1d] shadow-[0_4px_16px_4px_rgba(0,0,0,0.45)]">
        <span className="text-[37.5px] leading-[56px] mt-[25px] text-[#a9a9a9]">矢量A</span>
      </div>

      <Node className="left-[460px] top-[115px] w-[266px] h-[225px]" head="bg-[#6a283d]" title="矢量">
        <Row side="r" className="h-[36px] mt-[8.500px]">矢量</Row>
        <Vec v="1.000" className="mt-[14px] ml-[18px] mr-[19px] h-[115px]" />
      </Node>

      <VizNode className="left-[899px] top-[120px] w-[267px] h-[380px]" dirRow="h-[34px] mt-[11px] mb-[6px]" originRow="h-[34px] mt-[5px] mb-[3px]" />

      <Node className="left-[898px] top-[507px] w-[266px] h-[231px]" head="bg-[#3f2d62]" title="缩放">
        <Row side="r" className="h-[36px] mt-[8.500px]">矢量</Row>
        <div className="flex items-center justify-between mt-[18px] ml-[20px] mr-[20px] h-[35px] pl-[13px] pr-[5px] rounded-[7px] bg-[#030509] shrink-0"><span>缩放</span><Down /></div>
        <Row side="l" className="h-[34px] mt-[7.500px] mb-[5px]">矢量</Row>
        <div className="relative h-[38px] pl-[18px] pr-[20px] shrink-0"><Field label="缩放" value="0.400" /><Socket side="l" color="bg-[#9e9e9e]" /></div>
      </Node>

      <VizNode className="left-[1312px] top-[387.500px] w-[266.500px] h-[378px]" dirRow="h-[34px] mt-[10px] mb-[5px]" originRow="h-[34px] mt-[5px] mb-[3px]" />

      <div className="absolute left-[1681px] top-[176px] flex items-center w-[265px] h-[57px] pl-[27px] rounded-full bg-[#13635d] ring-[1.5px] ring-[#060d18] shadow-[0_4px_16px_4px_rgba(0,0,0,0.45)]">
        <Right /><span className="ml-[9px]">合并几何</span>
        <span className="ml-auto mr-[16px] w-[9px] h-[16px] border-x-2 border-[#4f8f88]" />
        <span className="absolute -left-[10px] top-[17px] w-[19px] h-[22px] rounded-full border-[1.5px] border-[#0a0f17] bg-[#00d6a3]" />
        <Socket side="r" color="bg-[#00d6a3]" />
      </div>

      <Node className="left-[2042px] top-[140px] w-[267px] h-[137px]" head="bg-[#1d222b]" title="组输出">
        <Row side="l" color="bg-[#00d6a3]" className="h-[36px] mt-[9px]">几何数据</Row>
        <span className="absolute -left-[10px] top-[98px] size-[20px] rounded-full border-2 border-[#808080] bg-[#333]" />
      </Node>

      <div className="absolute right-[2px] top-[19px] w-[7px] h-[865px] rounded-full bg-[#1f2931]" />
      <div className="absolute left-[287px] bottom-[3px] w-[1233px] h-[6px] rounded-full bg-[#1f2931]" />
      <div className="absolute right-0 top-[29px] w-[15px] h-[27px] rounded-l-[4px] bg-[#15191d] flex items-center justify-end pr-px">
        <Svg w={9} h={15}><path d="M8.500 1L1.500 7.500l7 6.500" stroke="#9a9da0" strokeWidth="2.400" /></Svg>
      </div>
    </div>
  </div>
);

export default function App() {
  return (
    <div className="w-[2543px] h-[1969px] pt-[5px] pl-[5px] flex flex-col overflow-hidden bg-[#0b1013] text-[#e4e4e4] text-[21px] leading-none whitespace-nowrap font-['Inter','Noto_Sans_CJK_SC',sans-serif]">
      <Viewport />
      <NodeEditor />
    </div>
  );
}
